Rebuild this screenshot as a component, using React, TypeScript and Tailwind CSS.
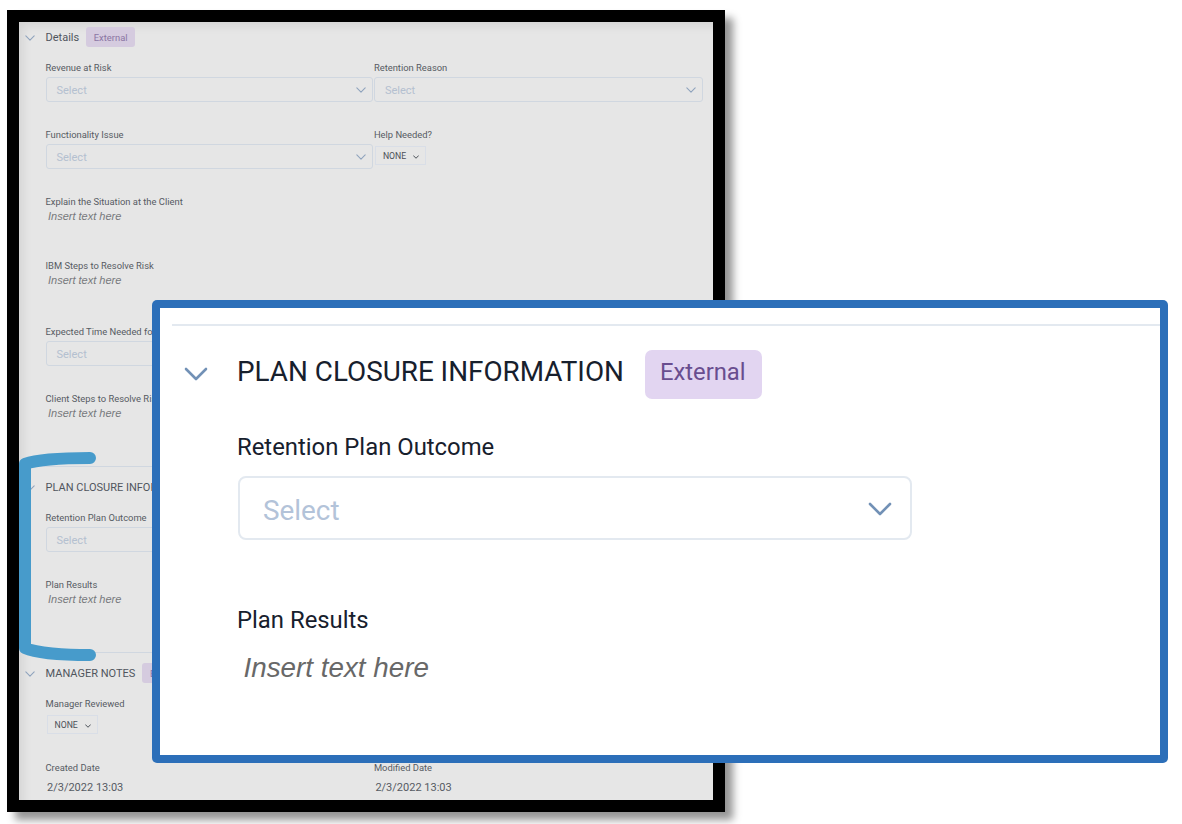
import type { ReactNode } from "react";

function Chevron({ className }: { className: string }) {
  return (
    <svg viewBox="0 0 24 14" fill="none" stroke="currentColor" strokeLinecap="round" strokeLinejoin="round" className={className}>
      <path d="M2 2L12 12L22 2" />
    </svg>
  );
}

function SectionHeader({ title, badge }: { title: string; badge?: boolean }) {
  return (
    <div className="flex h-[30px] items-center">
      <Chevron className="ml-1.5 mr-[10.5px] mt-px h-[6px] w-[10px] shrink-0 stroke-[2.6] text-[#8fa3bd]" />
      <h2 className="whitespace-nowrap pt-0.5 text-[11px] leading-4 text-[#50555d]">{title}</h2>
      {badge && (
        <span className="ml-[7px] flex h-5 w-[49px] shrink-0 items-center justify-center rounded-[3px] bg-[#d5cbdf] pt-0.5 text-[9.4px] text-[#8b75a3]">
          External
        </span>
      )}
    </div>
  );
}

function Field({ label, className = "", children }: { label: string; className?: string; children: ReactNode }) {
  return (
    <div className={`shrink-0 ${className}`}>
      <div className="h-[15px] whitespace-nowrap text-[9.4px] leading-[15px] text-[#565b63]">{label}</div>
      {children}
    </div>
  );
}

function Select() {
  return (
    <div className="mt-[2px] flex h-[25px] items-center justify-between rounded-[3px] border-[1.5px] border-[#d0d7e0] pl-[10px] pr-[6px] text-[11px] leading-none text-[#b4c0d0]">
      <span className="pt-px">Select</span>
      <Chevron className="h-[6px] w-[10px] stroke-[2.6] text-[#8fa3bd]" />
    </div>
  );
}

function SmallSelect() {
  return (
    <div className="ml-[1.5px] mt-[4px] flex h-[19px] w-[51px] items-center border border-[#d9dee7] pl-[6.5px] pt-[2px] text-[8.7px] text-[#4b5058]">
      <span>NONE</span>
      <Chevron className="ml-[7px] h-[4px] w-[6px] stroke-[4] text-[#4b5058]" />
    </div>
  );
}

function InsertText() {
  return (
    <div className="ml-[2.5px] h-[15px] whitespace-nowrap font-['Liberation_Sans',sans-serif] text-[11px] italic leading-[15px] text-[#77797c]">
      Insert text here
    </div>
  );
}

function RiskForm() {
  return (
    <div className="h-[802px] w-[718px] border-[12px] border-black bg-[#e6e6e6] shadow-[8px_8px_8px_rgba(0,0,0,0.42)]">
      <div className="flex h-full flex-col overflow-hidden shadow-[inset_8px_8px_10px_-4px_rgba(0,0,0,0.08)]">
        <SectionHeader title="Details" badge />
        <div className="flex flex-col pl-[26.5px] pt-[8px]">
          <div className="flex h-[67px] gap-px">
            <Field label="Revenue at Risk" className="w-[327.4px]"><Select /></Field>
            <Field label="Retention Reason" className="w-[329px]"><Select /></Field>
          </div>
          <div className="flex h-[67px] gap-px">
            <Field label="Functionality Issue" className="w-[327.4px]"><Select /></Field>
            <Field label="Help Needed?"><SmallSelect /></Field>
          </div>
          <Field label="Explain the Situation at the Client" className="h-[64px]"><InsertText /></Field>
          <Field label="IBM Steps to Resolve Risk" className="h-[66px]"><InsertText /></Field>
          <Field label="Expected Time Needed for Resolution" className="h-[67px] w-[328px]"><Select /></Field>
          <Field label="Client Steps to Resolve Risk" className="h-[75px]"><InsertText /></Field>
        </div>
        <div className="h-[186px] border-t border-[#d0d7e0] pt-[5px]">
          <SectionHeader title="PLAN CLOSURE INFORMATION" />
          <div className="flex flex-col pl-[26.5px] pt-[8px]">
            <Field label="Retention Plan Outcome" className="h-[67px] w-[328px]"><Select /></Field>
            <Field label="Plan Results"><InsertText /></Field>
          </div>
        </div>
        <div className="border-t border-[#d0d7e0] pt-[5px]">
          <SectionHeader title="MANAGER NOTES" badge />
          <div className="flex flex-col pl-[26.5px] pt-[8px]">
            <Field label="Manager Reviewed" className="h-[64px]"><SmallSelect /></Field>
            <div className="flex gap-px">
              <Field label="Created Date" className="w-[327.4px]">
                <div className="ml-[1.5px] mt-[5px] text-[11px] leading-4 text-[#565b63]">2/3/2022 13:03</div>
              </Field>
              <Field label="Modified Date">
                <div className="ml-[1.5px] mt-[5px] text-[11px] leading-4 text-[#565b63]">2/3/2022 13:03</div>
              </Field>
            </div>
          </div>
        </div>
      </div>
    </div>
  );
}

function PlanClosureCallout() {
  return (
    <section className="absolute left-[152px] top-[300px] flex h-[463px] w-[1016px] flex-col rounded-[5px] bg-[#2c6fb9] p-2">
      <div className="flex-1 bg-white pl-3 pt-4">
        <div className="border-t-2 border-[#e3e9f0] pt-[23px]">
          <div className="flex h-[50px] items-center pl-3">
            <Chevron className="h-[14px] w-6 shrink-0 stroke-[2.6] text-[#7291b6]" />
            <h1 className="ml-[29px] w-[386px] whitespace-nowrap pb-1 text-[27.85px] leading-8 text-[#17202d]">PLAN CLOSURE INFORMATION</h1>
            <span className="ml-[21.5px] flex h-[49px] w-[117.5px] items-center justify-center rounded-[7px] bg-[#e2d5f1] pb-[3px] pr-px text-[23.8px] text-[#694d8f]">External</span>
          </div>
          <div className="pl-[65px] pt-8">
            <div className="text-[23.87px] leading-8 text-[#17202d]">Retention Plan Outcome</div>
            <div className="ml-px mt-[13px] flex h-[64px] w-[674px] items-center justify-between rounded-[8px] border-2 border-[#e3e9f0] pl-[23px] pr-[18px] text-[27.85px] text-[#b3c3d9]">
              <span className="pt-[5px]">Select</span>
              <Chevron className="mt-[2px] h-[14px] w-6 stroke-[2.6] text-[#7291b6]" />
            </div>
            <div className="mt-[64px] text-[23.87px] leading-8 text-[#17202d]">Plan Results</div>
            <div className="ml-[6.5px] mt-4 font-['Liberation_Sans',sans-serif] text-[27.8px] italic leading-8 text-[#686868]">Insert text here</div>
          </div>
        </div>
      </div>
    </section>
  );
}

export default function App() {
  return (
    <main className="relative h-[824px] w-[1182px] overflow-hidden bg-white pl-[7px] pt-[10px] font-[Roboto,sans-serif]">
      <RiskForm />
      <svg viewBox="0 0 90 220" fill="none" className="absolute left-[15px] top-[446px] h-[220px] w-[90px]">
        <path d="M75 12C45 12 21 14 10 18V202C21 207 50 209 75 209" stroke="#479bcb" strokeWidth="12" strokeLinecap="round" strokeLinejoin="round" />
      </svg>
      <PlanClosureCallout />
    </main>
  );
}
